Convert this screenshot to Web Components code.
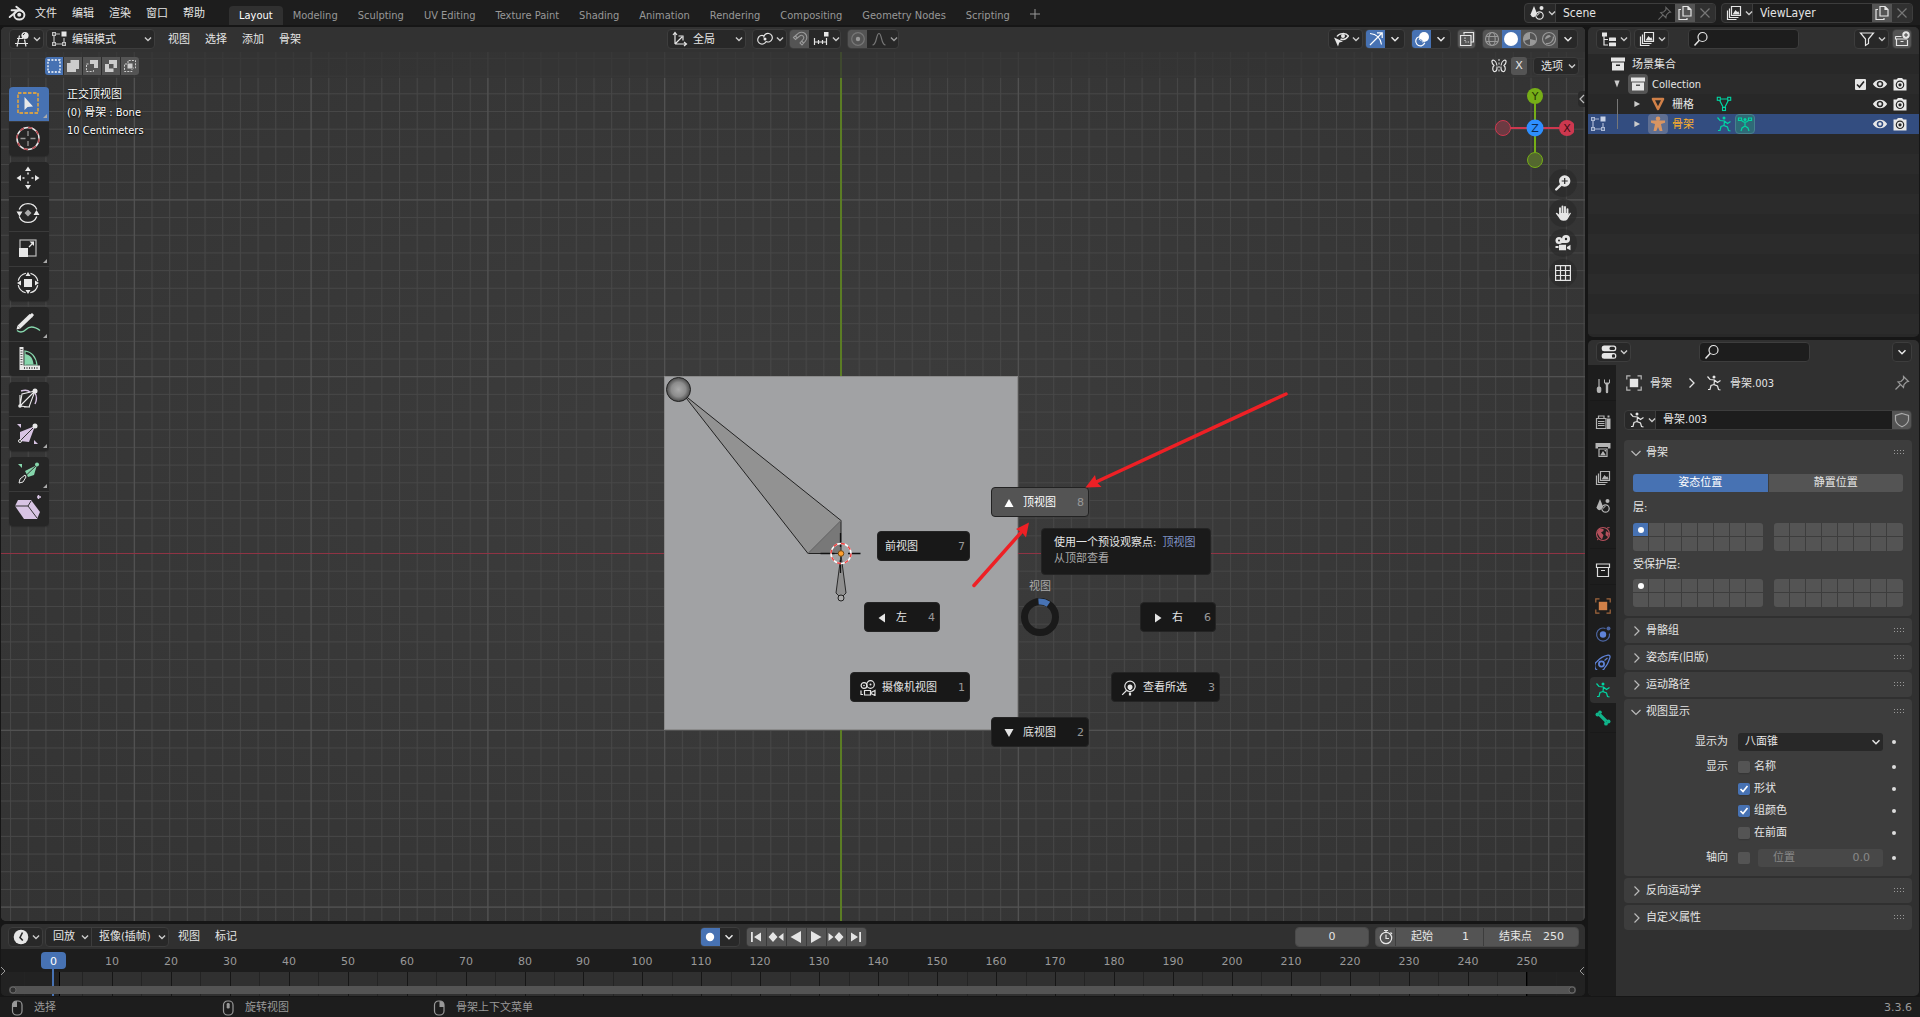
<!DOCTYPE html>
<html lang="zh-CN">
<head>
<meta charset="utf-8">
<title>Blender</title>
<style>
html,body{margin:0;height:100%;background:#161616;overflow:hidden}
body{font-family:"DejaVu Sans Condensed","DejaVu Sans","Noto Sans CJK SC",sans-serif;font-size:11px;line-height:16px;color:#e5e5e5}
</style>
</head>
<body>
<blender-app></blender-app>
<script>
const BASE = `
*{box-sizing:border-box}
button,input,select{font:inherit;color:inherit;border:0;margin:0;padding:0;background:none;border-radius:0;outline:0;text-align:left}
input{min-width:0}
.row{display:flex;align-items:center}
.seg{display:flex;align-items:stretch;height:20px;border:1px solid #3d3d3d;border-radius:4px;overflow:hidden;background:#282828}
.seg>button,.seg>span{display:flex;align-items:center;justify-content:center;white-space:nowrap}
.seg>button{min-width:19px}
.on{background:#4772b3;color:#fff}
.lit{background:#545454}
.dim{background:#303030;color:#777}
.menu{padding:1px 7px 0 8px;white-space:nowrap}
`;
function define(name, css, html, init) {
  const t = document.createElement('template');
  t.innerHTML = `<style>${BASE}${css}</style>${typeof html === 'string' ? html : ''}`;
  customElements.define(name, class extends HTMLElement {
    connectedCallback() {
      if (this.shadowRoot) return;
      const r = this.attachShadow({ mode: 'open' });
      r.append(t.content.cloneNode(true));
      if (typeof html === 'function') r.innerHTML += html(this);
      if (init) init(this, r);
    }
  });
}
const S = 'fill="none" stroke="currentColor" stroke-width="1.2"';
const F = 'fill="currentColor"';
const ICONS = {
  blender: `<g fill="none" stroke="currentColor" stroke-width="1.7" stroke-linecap="round" stroke-linejoin="round"><ellipse cx="10" cy="9.8" rx="4.6" ry="4"/><path d="M1.5 11.6 9 5.6H3.2M7.4 2.4l6 4.8"/></g><circle cx="10" cy="9.6" r="1.8" ${F}/>`,
  chev: `<path d="M4.500 6.300 8 9.800l3.500-3.500" fill="none" stroke="currentColor" stroke-width="1.500"/>`,
  ed3d: `<path d="M3 7.500h6M1 12.500h13M5.500 4.500l-2.500 11M10.500 8.500l1.500 7" ${S}/><circle cx="11" cy="4.500" r="3.600" ${F}/><path d="M9.300 4a2 2 0 0 1 1.500-1.600" stroke="#282828" fill="none"/>`,
  edit: `<g ${S} opacity=".8"><rect x="1.600" y="1.600" width="2.800" height="2.800"/><rect x="1.600" y="11.600" width="2.800" height="2.800"/><rect x="11.600" y="11.600" width="2.800" height="2.800"/><path d="M3 4.500v7M4.500 13h7M13 7v4.500M4.500 3H9"/></g><rect x="10.500" y=".5" width="5" height="5" ${F}/>`,
  orient: `<path d="M3 13V2M3 13h11M3 13l7-7M1 4l2-2.500L5 4M12 11l2.500 2-2.500 2M6.500 5H11v4.500" ${S}/>`,
  pivot: `<path d="M9 10.500a4.300 4.300 0 1 1-2.500-5.800M6.700 6.500a4.300 4.300 0 1 1 2.300 4" ${S}/><circle cx="8" cy="8" r="1.500" ${F}/>`,
  magnet: `<path d="M1.500 6.500 5.500 3a5.200 5.200 0 0 1 8 7l-3.500 4-2-2 3.400-4A2.400 2.400 0 0 0 7.700 5L3.500 8.500zM9.500 10l2 2M3.300 5l2 2" fill="none" stroke="currentColor" stroke-width="1.100"/>`,
  snapinc: `<path d="M1.500 7v7M5.500 9v4M9.500 9v4M13.500 7v7M1.500 11h12" ${S}/><rect x="11" y="1" width="4.500" height="4.500" ${F}/>`,
  propo: `<circle cx="8" cy="8" r="6.300" ${S} opacity=".5"/><circle cx="8" cy="8" r="2.200" ${F}/>`,
  curve: `<path d="M1.500 14C6 14 5 2.500 8 2.500S10 14 14.500 14" ${S}/>`,
  vis: `<path d="M4 5.500C6 2 13 1.500 15.500 5 13 8.800 9.500 8.800 7.500 8" fill="none" stroke="currentColor" stroke-width="1.500"/><circle cx="10" cy="5" r="2" ${F}/><path d="M1 6.500l9 4-3.700 1-1.300 4z" ${F}/>`,
  gizmo: `<path d="M2 2.500C8 3 12.500 7 13.500 13.500M2 14 14 2M9 1.800H14.200V7" ${S}/>`,
  overlay: `<circle cx="10" cy="6" r="5" ${F}/><path d="M5 5.700A4.700 4.700 0 1 0 10.800 11.800" ${S}/><path d="M4.800 8.500a5.500 5.500 0 0 1 3.500-1M8.300 7.500q1.500 2 .5 4" stroke="currentColor" fill="none"/><path d="M6.500 8.200l2.300 2.300" stroke="#4772b3"/>`,
  xray: `<path d="M5 3.500V1.500h9.500V11H12M1.500 4.500h10.500V14.500H1.500z" ${S}/><path d="M6 6.500V11h4.500" stroke="currentColor" stroke-width="1.200" stroke-dasharray="1.200 1.200" fill="none"/>`,
  wire: `<circle cx="8" cy="8" r="6.500" ${S}/><ellipse cx="8" cy="8" rx="3.200" ry="6.500" ${S}/><path d="M2 5.500h12M2 10.500h12" ${S}/>`,
  solid: `<circle cx="8" cy="8" r="7" ${F}/>`,
  matprev: `<circle cx="8" cy="8" r="6.500" ${S}/><path d="M8 8V1.500A6.500 6.500 0 0 0 2 10L8 8zM8 8l6 1.500a6.500 6.500 0 0 1-6 5z" ${F}/>`,
  rendered: `<circle cx="8" cy="8" r="6.500" ${S}/><path d="M4 8.500A4.500 4.500 0 0 1 8.500 4l1.500 1.500z" ${F}/><path d="M5 12.500a6.500 6.500 0 0 0 7.500-7" ${S}/>`,
  butterfly: `<path d="M6 7.500C5.500 2.500 1.500 1 1 3S2 6.500 3 7.500C1 9.500 1.500 14 4 13.500S6 10 6 8.500M10 7.500C10.500 2.500 14.500 1 15 3S14 6.500 13 7.500C15 9.500 14.500 14 12 13.500S10 10 10 8.500" ${S}/><path d="M8 1v14" stroke="currentColor" stroke-dasharray="2 1.500"/>`,
  scene: `<path d="M5 1 1.500 9.500Q3 13.500 6 11.500L8 8.500Z" ${F}/><circle cx="12.500" cy="3" r="2" ${F}/><circle cx="10.500" cy="10.500" r="3.700" ${S}/><path d="M8.500 10.500a2 2 0 0 1 2-2" stroke="currentColor" fill="none"/>`,
  pin: `<path d="M9.500 1.500l5 5-2 .5-2.500 2.500-.5 3L4 7l3-.5L9.500 4zM6.500 9.500l-5 5" ${S}/>`,
  copy: `<path d="M6 1.500h5L14 4.500V11H6zM11 1.500v3h3M4 4.500H2V14.500h8V13" ${S}/>`,
  close: `<path d="M3.500 3.500l9 9M12.500 3.500l-9 9" fill="none" stroke="currentColor" stroke-width="1.200"/>`,
  vlayer: `<path d="M5.500 1.500h9v9h-9zM3.500 3.500v9h9M1.500 5.500v9h9" ${S}/><path d="M6.500 9.500 9.500 5l1.800 2 1-.8 1.500 3.300z" ${F}/>`,
  outl: `<path d="M3 5v9h4M3 8.500h4" ${S}/><rect x="1" y="1.500" width="5" height="4" ${F}/><rect x="8" y="6.500" width="7" height="3.600" rx=".5" ${F}/><rect x="8" y="11.600" width="7" height="3.600" rx=".5" ${F}/>`,
  search: `<circle cx="9.500" cy="6" r="4.500" ${S}/><path d="M6.300 9.300 1.500 14.500" fill="none" stroke="currentColor" stroke-width="1.500"/>`,
  filter: `<path d="M1.500 2h13L9.500 8v4.500l-3 2V8z" ${S}/>`,
  newcoll: `<path d="M1.500 5.500h6M2.500 8v6.500h11V9M1.500 5.500V8h12M6.500 10.500h3" ${S}/><circle cx="12" cy="4" r="3.700" ${F}/><path d="M12 2v4M10 4h4" stroke="#444" fill="none"/>`,
  coll: `<path d="M1 1.500h14v4H1zM2 6.500h12v8H2zM6 8.500v1.600h4V8.500z" fill="currentColor" fill-rule="evenodd"/>`,
  colltab: `<path d="M1.500 2h13v3.500h-13zM2.500 5.500h11v9h-11zM6 8.500h4" ${S}/>`,
  mesh: `<path d="M3 3h10L8 13z" fill="none" stroke="currentColor" stroke-width="2.600" stroke-linejoin="round"/>`,
  meshd: `<path d="M3 3h10L8 13z" ${S}/><g fill="#282828" stroke="currentColor" stroke-width="1.100"><rect x="1.300" y="1.300" width="3" height="3"/><rect x="11.700" y="1.300" width="3" height="3"/><rect x="6.500" y="11.500" width="3" height="3"/></g>`,
  man: `<circle cx="8" cy="2.800" r="2.300" ${F}/><path d="M1 4.500h14v2.200L11 8l1.500 7H9.700L8 11l-1.700 4H3.500L5 8 1 6.700z" ${F}/>`,
  run: `<circle cx="8" cy="2" r="1.500" ${F}/><path d="M1.500 1.500 4 4.500l4.500.500 3 2.500 3-2M8.500 5l-.500 4.500 3.500 1.500 1 3.500 2 .500M8 9.500l-3 1-1 4H2" ${S}/>`,
  pose: `<circle cx="8" cy="3.500" r="1.500" ${F}/><path d="M1.500 2h3v2.500h-3zM11.500 2h3v2.500h-3zM4.500 4.500 6.500 6h3l2-1.500M8 6v4M4 15l1-3 3-2 3 2 1 3" ${S}/>`,
  eye: `<path d="M.8 8C4 2.300 12 2.300 15.200 8 12 13.700 4 13.700.8 8zM8 4.700a3.300 3.300 0 1 0 .010 0z" fill="currentColor" fill-rule="evenodd"/><circle cx="8" cy="8" r="1.700" ${F}/>`,
  cam: `<path d="M1.500 3.500h3L6 2h4l1.500 1.500h3v11h-13z" ${F}/><circle cx="8" cy="8.800" r="3.700" fill="none" stroke="#282828" stroke-width="1.200"/><circle cx="8" cy="8.800" r="1.600" fill="#282828"/>`,
  props: `<rect x=".7" y="1.500" width="14.600" height="5.800" rx="2.500" ${F}/><rect x=".7" y="9" width="14.600" height="5.800" rx="2.500" ${F}/><rect x="8.500" y="2.700" width="5.500" height="3.400" rx="1.500" fill="#282828"/><rect x="11" y="10.200" width="3" height="3.400" rx="1.200" fill="#282828"/>`,
  tool: `<path d="M4 1v8" ${S}/><rect x="1.800" y="8.500" width="4.500" height="6.500" rx="2" ${F}/><path d="M9 1.500v3.200L10.800 6.800V14a1.200 1.200 0 0 0 2.400 0V6.800L15 4.700V1.500H14v3h-4v-3z" ${F}/>`,
  render: `<path d="M1.500 4.500H11v10H1.500zM3.500 4V2h5.500v2" ${S}/><path d="M12 4.500h3.500V15H12zM12.500 1.500h2v2h-2z" ${F}/><path d="M3 7.500h6.500M3 9.500h6.500M3 11.500h6.500" stroke="currentColor"/>`,
  output: `<path d="M.5 1h15v5.500h-2.500V5H3v1.500H.5z" ${F}/><path d="M4 7h8v7.500H4z" ${S}/><path d="M5 13.500l3-4.500 3 4.500zM9 8h2v2z" ${F}/>`,
  world: `<circle cx="8" cy="8" r="6.500" ${S}/><path d="M2 6.500 4.500 2.500l4 .500v2L6 6.500 8.500 9 7 13.500 4.500 11zM11 5l3 2-1 4-2.500-2z" ${F}/><path d="M12 2l2.500-.500M2 14l1.500-1" stroke="currentColor"/>`,
  object: `<rect x="3.800" y="3.800" width="8.400" height="8.400" ${F}/><path d="M.8 4.500V.8h3.700M11.500.8h3.700v3.700M15.200 11.500v3.700h-3.700M4.500 15.200H.8v-3.700" ${S} opacity=".75"/>`,
  physics: `<circle cx="8" cy="8.500" r="3.200" ${F}/><circle cx="13.500" cy="2.500" r="2" ${F} opacity=".7"/><path d="M10.500 2.500a6.500 6.500 0 1 0 4 5" ${S} opacity=".7"/>`,
  constraint: `<path d="M2 7.500C5 4 9 2 13 1.200c1.800-.2 2.500 1 1.800 2.800C13.500 8 12 11.500 9.800 13.500M2 7.500a5.200 5.200 0 1 0 7.800 6" ${S}/><circle cx="6.500" cy="10" r="2.600" fill="none" stroke="currentColor" stroke-width="1.700"/><path d="M9.500 6.500l3-2.500" ${S}/>`,
  bone: `<path d="M4.500 4.500l7 7" fill="none" stroke="currentColor" stroke-width="3.200"/><circle cx="2.500" cy="4.500" r="2" ${F}/><circle cx="5" cy="2.300" r="1.800" ${F}/><circle cx="13.500" cy="11.500" r="2" ${F}/><circle cx="11" cy="13.700" r="1.900" ${F}/>`,
  shield: `<path d="M8 1.500 14.500 3.500V8C14 11.500 11 13.500 8 14.800 5 13.500 2 11.500 1.500 8V3.500z" ${S}/>`,
  clock: `<circle cx="8" cy="8" r="7.300" ${F}/><path d="M9.500 3.500 7 8.500 9.800 11.500" fill="none" stroke="#282828" stroke-width="1.600"/>`,
  watch: `<circle cx="8" cy="9" r="5.700" ${S}/><path d="M6 1.500h4M8 1.500v2M12.500 3.500l1.500 1.500M8 5.500V9.500h3" ${S}/>`,
  first: `<path d="M3 3h1.800v10H3zM13 3.500v9L6 8z" ${F}/>`,
  last: `<path d="M11.200 3H13v10h-1.800zM3 3.500v9L10 8z" ${F}/>`,
  prevk: `<path d="M5 3l4.500 5L5 13 .5 8zM15.500 4v8L10.500 8z" ${F}/>`,
  nextk: `<path d="M11 3l4.500 5L11 13 6.500 8zM.5 4v8L5.500 8z" ${F}/>`,
  rev: `<path d="M13 2v12L2.500 8z" ${F}/>`,
  play: `<path d="M3 2v12L13.500 8z" ${F}/>`,
  dot: `<circle cx="8" cy="8" r="4.200" ${F}/>`,
  mouseL: `<rect x="3.500" y="1" width="9.500" height="14" rx="4" ${S}/><path d="M8 1v6H3.500V4Q4 1 8 1z" ${F}/>`,
  mouseM: `<rect x="3.500" y="1" width="9.500" height="14" rx="4" ${S}/><rect x="6.700" y="3" width="3" height="5.500" rx="1.200" ${F}/>`,
  mouseR: `<rect x="3.500" y="1" width="9.500" height="14" rx="4" ${S}/><path d="M8.500 1v6H13V4Q12.500 1 8.500 1z" ${F}/>`,
  zoom: `<circle cx="9.700" cy="6" r="5.700" ${F}/><path d="M6 9.800 1.200 14.500" stroke="currentColor" stroke-width="2.400" stroke-linecap="round"/><path d="M9.700 3v6M6.700 6h6" stroke="#282828" stroke-width="1.200"/>`,
  hand: `<path d="M5 9V3.200M7.500 8V1.500M10 8V2M12.500 9V4.200" fill="none" stroke="currentColor" stroke-width="1.900" stroke-linecap="round"/><path d="M4 8h9.500v2L15 7.500l1 .8-3.500 6q-1 1.500-4 1.500-3.500 0-4.500-3L.8 8.500Q1 7.300 2.200 8L4.500 10z" ${F}/>`,
  camera: `<circle cx="4" cy="5.500" r="3.500" ${F}/><circle cx="11" cy="4" r="4" ${F}/><path d="M3 4h8v4H3zM4 9.800h7v5.500H4zM12 12l3.500-2.300v5.600L12 13.500zM.5 11h3v2h-3z" ${F}/><circle cx="4" cy="5.500" r="1" fill="#282828"/><circle cx="11" cy="4" r="1.200" fill="#282828"/>`,
  persp: `<path d="M.6.600h14.800v14.800H.600zM5.500.600v14.800M10.500.600v14.800M.600 5.500h14.800M.600 10.500h14.800" ${S}/>`,
  camview: `<circle cx="4" cy="5.500" r="2.900" ${S}/><circle cx="10.500" cy="4.500" r="3.800" ${S}/><circle cx="4" cy="5.500" r=".8" ${F}/><circle cx="10.500" cy="4.500" r="1" ${F}/><path d="M4.500 10.500h6v4.500h-6zM11 12.500l4-2v5l-4-2M1 10.500v4h2" ${S}/>`,
  viewsel: `<circle cx="9" cy="6.300" r="5.200" ${S}/><path d="M5.500 10.500 1.200 14.800" ${S}/><circle cx="9" cy="7" r="2.500" ${F}/><path d="M9 7v3M9 12.500v3" stroke="currentColor" stroke-width="2.200"/>`,
  up: `<path d="M8 4l4.500 8h-9z" ${F}/>`, down: `<path d="M8 12l4.500-8h-9z" ${F}/>`,
  left: `<path d="M4.500 8 11 3.500v9z" ${F}/>`, right: `<path d="M11.500 8 5 3.500v9z" ${F}/>`,
  tdown: `<path d="M8 12l3-8H5z" ${F}/>`, tright: `<path d="M11.500 8 5 4.500v7z" ${F}/>`,
  gt: `<path d="M5.500 3.500l4.500 4.500-4.500 4.500" fill="none" stroke="currentColor" stroke-width="1.300"/>`,
  selnew: `<rect x="2" y="2" width="12" height="12" fill="none" stroke="currentColor" stroke-width="1.300" stroke-dasharray="2 1.400"/>`,
  seladd: `<path d="M5.500 2H14v9h-3v3H2V5h3.500z" ${F}/>`,
  selsub: `<path d="M6 2h8v8h-4V6H6z" ${F}/><path d="M2.500 7v6.500H9.500V11M2.500 6H5" fill="none" stroke="currentColor" stroke-dasharray="2 1.200"/>`,
  selinv: `<path d="M6 2h8v8h-3.500v4H2V6h4zM6 6v4.500h4.500V6z" fill="currentColor" fill-rule="evenodd"/>`,
  selint: `<rect x="5.500" y="5.500" width="5" height="5" ${F}/><path d="M6 5V2.500h7.500V10H11M5 6H2.500v7.500H10V11" fill="none" stroke="currentColor" stroke-dasharray="2 1.200"/>`
};
define('bl-icon', `:host{display:inline-flex;flex:none;width:16px;height:16px}svg{display:block;width:100%;height:100%}`,
  el => `<svg viewBox="0 0 16 16" aria-hidden="true">${ICONS[el.getAttribute('name')] || ''}</svg>`);

define('bl-drop', `:host{display:flex;height:20px}
button{flex:1;display:flex;align-items:center;background:#282828;border:1px solid #3d3d3d;border-radius:4px;padding:0 0 0 4px;white-space:nowrap}
:host([flat]) button{border:0;border-radius:0;background:none}
:host([plain]) button{padding-left:7px}
span{flex:1;padding:1px 0 0 5px}:host([plain]) span{padding-left:0}
:host([bare]) span{padding:0}
.c{width:14px;height:14px;margin-right:-1px;color:#ccc}`,
  el => `<button aria-haspopup="true" aria-label="${el.getAttribute('icon') || 'menu'}">${el.hasAttribute('icon') ? `<bl-icon name="${el.getAttribute('icon')}"></bl-icon>` : ''}<span><slot></slot></span><bl-icon class="c" name="chev"></bl-icon></button>`);

define('id-block', `:host{display:block}.seg{width:192px}bl-drop{width:31px;border-right:1px solid #3d3d3d;height:auto}
.f{flex:1;background:#1d1d1d;padding:0 3px 0 7px;font-size:12px}input{flex:1;width:50px}.f bl-icon{color:#666;width:15px;height:15px}.seg>button{min-width:20px}`,
  el => `<div class="seg"><bl-drop flat bare icon="${el.getAttribute('icon')}"></bl-drop><span class="f row"><input aria-label="${el.getAttribute('value')}" value="${el.getAttribute('value')}">${el.hasAttribute('pin') ? '<bl-icon name="pin"></bl-icon>' : ''}</span><button class="lit" aria-label="copy"><bl-icon name="copy"></bl-icon></button><button class="dim" aria-label="remove"><bl-icon name="close"></bl-icon></button></div>`);

define('top-bar', `:host{display:flex;height:27px;background:#1d1d1d;border-bottom:2px solid #161616;padding-right:7px;align-items:flex-start}
.m{display:flex;height:26px;align-items:center;padding-left:6px}.logo{margin:0 1px 0 2px;width:18px;height:18px}
nav{display:flex;flex:1;padding:6px 0 0 17px;height:25px}
nav button{padding:1px 10px 0;color:#989898;height:19px;white-space:nowrap}
nav button.a{background:#303030;color:#fff;border-radius:4px 4px 0 0}
.ids{display:flex;gap:5px;padding-top:3px}`,
  `<div class="m"><bl-icon class="logo" name="blender"></bl-icon><button class="menu">文件</button><button class="menu">编辑</button><button class="menu">渲染</button><button class="menu">窗口</button><button class="menu">帮助</button></div>
<nav><button class="a">Layout</button><button>Modeling</button><button>Sculpting</button><button>UV Editing</button><button>Texture Paint</button><button>Shading</button><button>Animation</button><button>Rendering</button><button>Compositing</button><button>Geometry Nodes</button><button>Scripting</button><button aria-label="add"><svg width="10" height="10" viewBox="0 0 10 10"><path d="M5 0v10M0 5h10" stroke="#989898" fill="none"/></svg></button></nav>
<div class="ids"><id-block icon="scene" value="Scene" pin></id-block><id-block icon="vlayer" value="ViewLayer"></id-block></div>`);

const W = '#e8e8e8', P = '#d8c4e4', G = '#86d6ac';
const TOOLS = [
 [[`<rect x="9" y="6" width="20" height="20" fill="none" stroke="#ffae29" stroke-width="1.300" stroke-dasharray="3.500 1.500"/><path d="M15.500 10v13l3-3 5.500-.500z" fill="${W}"/>`,1,1],
  [`<circle cx="19" cy="16.500" r="11" fill="none" stroke="${W}" stroke-width="1.500"/><circle cx="19" cy="16.500" r="11" fill="none" stroke="#b5484f" stroke-width="1.500" stroke-dasharray="4.300 4.300"/><path d="M19 9v5M19 19v5M11.500 16.500h5M21.500 16.500h5" stroke="#999" stroke-width="1.300"/>`]],
 [[`<path d="M19 4.500l3 4.500h-6zM19 27.500l3-4.500h-6zM7.500 16l4.500-3v6zM30.500 16 26 13v6z" fill="${W}"/><path d="M19 10.500v2M19 19.500v2M13.500 16h2M22.500 16h2" stroke="${W}" stroke-width="1.500"/>`],
  [`<path d="M10.200 12.500a9.500 9.500 0 0 1 17.600 0M10.200 19.500a9.500 9.500 0 0 0 17.600 0" fill="none" stroke="${W}" stroke-width="1.300"/><path d="M7.500 14.500h6l-3 5zM24.500 18h6l-3-5z" fill="${W}"/><path d="M19 12.500l3.500 3.500-3.500 3.500-3.500-3.500z" fill="#aaa"/>`],
  [`<rect x="11" y="8" width="16" height="16" fill="none" stroke="#bbb" stroke-width="1.200"/><rect x="10" y="16" width="9" height="9" fill="${W}"/><path d="M20 15l3.500-3.500" stroke="${W}" stroke-width="1.300"/><path d="M25 9.500v4.500l-4.500-4.500z" fill="${W}"/>`,1],
  [`<circle cx="19" cy="16" r="10" fill="none" stroke="${W}" stroke-width="1.200" stroke-dasharray="11 4.700" stroke-dashoffset="-2.300"/><rect x="15" y="12" width="8" height="8" fill="${W}"/><path d="M19 5l2.500 4h-5zM19 27l2.500-4h-5zM8 16l4-2.500v5zM30 16l-4-2.500v5z" fill="${W}"/>`]],
 [[`<path d="M8 23.500c4 3 7 1 9-1s6-5 14 1" fill="none" stroke="${G}" stroke-width="1.400"/><path d="M10 20 22 8.500" stroke="${W}" stroke-width="4"/><path d="M7.500 22.500l1-4 3 3zM20.500 8l2.500-2 2 2-2 2.500z" fill="${W}"/>`,1],
  [`<path d="M16 9c8 1 11 7 12 14H16z" fill="none" stroke="${G}" stroke-width="1.200"/><path d="M16 12c6 1 8 5 8.500 10.500H16z" fill="${G}"/><path d="M10.500 5h4v18.500H31V28H10.500z" fill="${W}"/><path d="M12.500 7v17M15 26h15" stroke="#555" stroke-width="2" stroke-dasharray="1 1.500"/>`]],
 [[`<path d="M11 24 26 9 20 25zM11 24l2-12 13-3M11 24v-11M15 25h6" fill="none" stroke="${W}" stroke-width="1.100"/><path d="M12 9q6-2 9 1M26 11q3 5 0 11" fill="none" stroke="${P}" stroke-width="1.400"/><circle cx="26" cy="9" r="2.500" fill="${W}"/><circle cx="11" cy="24" r="1.800" fill="${W}"/>`],
  [`<path d="M26 9 11 15v9l9 1z" fill="${P}"/><path d="M26 9 11 24" stroke="#333"/><circle cx="26" cy="9" r="2.500" fill="${W}"/><circle cx="11" cy="24" r="1.500" fill="none" stroke="${W}"/><path d="M8 7h4v4zM29 27h-4v-4z" fill="${P}"/>`,1]],
 [[`<path d="M28 8 16 14l3 6 6-2z" fill="${G}"/><path d="M28 8 10 25" stroke="#333"/><circle cx="28" cy="7.500" r="2" fill="${G}"/><path d="M16 18l-5 4-1 4 4-1 3-5z" fill="none" stroke="${W}"/><path d="M9 7h4v4z" fill="${G}"/>`,1],
  [`<path d="M6 14 9 8h13l9 12-3 7H15z" fill="${P}"/><path d="M6 14h13l9 12M19 14l3-5" fill="none" stroke="#333"/><path d="M28 5h4M29.500 3v4" stroke="${P}" stroke-width="1.500"/>`]]
];
define('tool-shelf', `:host{display:flex;flex-direction:column;gap:6px;width:40px}
div{display:flex;flex-direction:column;gap:1px;border-radius:4px;overflow:hidden;box-shadow:0 1px 1px #2228;background:#3a3a3a}
button{height:34px;background:#262626}button.a{background:#4772b3}svg{display:block}`,
  () => TOOLS.map(g => `<div>${g.map(t => `<button aria-label="tool"${t[2] ? ' class="a"' : ''}><svg width="40" height="34" viewBox="0 0 40 34">${t[0]}${t[1] ? '<path d="M38 27v4h-4z" fill="#aaa"/>' : ''}</svg></button>`).join('')}</div>`).join(''));

define('pie-item', `:host{position:absolute;height:30px;display:flex}
button{flex:1;display:flex;align-items:center;background:#181818;border:1px solid #242424;border-radius:4px;padding:1px 4px 0 9px;white-space:nowrap}
:host([noicon]) button{padding-left:7px}
:host([active]) button{background:#545454;border-color:#222;color:#fff}
.l{flex:1;padding-left:6px}:host([noicon]) .l{padding-left:0}.k{color:#999;font-family:"DejaVu Sans"}`,
  el => `<button>${el.hasAttribute('icon') ? `<bl-icon name="${el.getAttribute('icon')}"></bl-icon>` : ''}<span class="l"><slot></slot></span><span class="k">${el.getAttribute('key')}</span></button>`);

define('view-canvas', `:host{display:block;position:absolute;inset:0}svg{display:block;width:100%;height:100%}`,
 `<svg><defs>
<radialGradient id="bg" cx=".5" cy=".5" r=".7"><stop offset="0" stop-color="#3d3d3d"/><stop offset="1" stop-color="#333"/></radialGradient>
<radialGradient id="ball"><stop offset="0" stop-color="#aaa"/><stop offset=".6" stop-color="#8c8c8c"/><stop offset="1" stop-color="#4a4a4a"/></radialGradient>
<pattern id="mi" width="17.680" height="17.680" patternUnits="userSpaceOnUse" x="840" y="526"><path d="M.5 0v17.680M0 .5h17.680" stroke="#474747" fill="none"/></pattern>
<pattern id="ma" width="176.800" height="176.800" patternUnits="userSpaceOnUse" x="840" y="526"><path d="M.5 0v176.800M0 .5h176.800" stroke="#545454" fill="none"/></pattern></defs>
<rect width="100%" height="100%" fill="url(#bg)"/><rect width="100%" height="100%" fill="url(#mi)"/><rect width="100%" height="100%" fill="url(#ma)"/>
<path d="M0 526.500h3000" stroke="#8f3344"/><path d="M840 0v1500" stroke="#5b7d24" stroke-width="2"/>
<g transform="translate(-1 -27)">
<rect x="664.500" y="376.500" width="353" height="353" fill="#a1a2a4" stroke="#8b8b8b"/>
<path d="M683 394 808 553.500 841 520.500z" fill="#929292"/><path d="M841 520.500V553.500H808z" fill="#787878"/>
<path d="M683 394 808 553.500H841V520.500ZM808 553.500 841 520.500" fill="none" stroke="#222"/><path d="M808 553.500 841 520.500" stroke="#929292" fill="none"/>
<circle cx="678.500" cy="389.500" r="12" fill="url(#ball)" stroke="#222"/>
<path d="M841 555l-5 38 3 3h4l3-3z" fill="#8f8f8f" stroke="#2a2a2a"/><circle cx="841" cy="598" r="3" fill="#aaa" stroke="#222"/>
<path d="M820.500 553.500h14M848 553.500h12.500M840.500 533v14M840.500 560v13" stroke="#111" stroke-width="1.300"/>
<circle cx="841" cy="553.500" r="10" fill="none" stroke="#fff" stroke-width="1.500"/><circle cx="841" cy="553.500" r="10" fill="none" stroke="#f04040" stroke-width="1.500" stroke-dasharray="3.900 3.900"/>
<circle cx="841" cy="553.500" r="2.800" fill="#ffa02e" stroke="#7a4a10"/></g></svg>`);

define('view-marks', `:host{display:block;position:absolute;inset:0;pointer-events:none}svg{display:block;width:100%;height:100%}`,
 `<svg><g transform="translate(-1 -27)"><circle cx="1040" cy="617" r="15.500" fill="none" stroke="#1a1a1a" stroke-width="7"/><path d="M1038.500 601.600a15.500 15.500 0 0 1 10 2.700" fill="none" stroke="#4772b3" stroke-width="6"/>
<g stroke="#ee2025" stroke-width="3.500" stroke-linecap="round" fill="none"><path d="M1286 394 1096 482M974 585.500l47-53"/></g>
<path d="M1085.500 487.500 1095 475 1096.500 482 1101.500 487zM1029 522.500 1016 529l6 3.500 4 5z" fill="#ee2025"/></g></svg>`);

define('axis-gizmo', `:host{display:block;position:absolute;right:11px;top:60px;width:80px;height:82px}`,
 `<svg width="80" height="82" viewBox="0 0 80 82" font-family="DejaVu Sans" font-size="11" text-anchor="middle"><g stroke-width="2"><path d="M41 9v64" stroke="#76ae17"/><path d="M9 41h64" stroke="#cd384f"/></g>
<circle cx="9" cy="41" r="7.500" fill="#6c3a42" stroke="#cd384f"/><circle cx="41" cy="73" r="7.500" fill="#54682f" stroke="#76ae17"/><circle cx="41" cy="9" r="8" fill="#76ae17"/><circle cx="73" cy="41" r="8" fill="#cd384f"/><circle cx="41" cy="41" r="8.500" fill="#2e8fff"/>
<text x="41" y="13" fill="#243505">Y</text><text x="73" y="45" fill="#3c0c14">X</text><text x="41" y="45" fill="#0c2a52">Z</text></svg>`);

define('view-3d', `:host{display:block;position:relative;overflow:hidden;border-radius:5px;background:#393939}
header{position:relative;display:grid;grid-template-columns:659fr auto 680fr;padding:2px 7px 3px 8px;background:#323232}
.g{display:flex;gap:6px;align-items:center}.r{justify-content:flex-end}.g .m{display:flex;padding-left:0;margin-left:-1px}
.seg bl-drop{height:18px;width:31px}
.shade{width:96px}.shade button{flex:1;min-width:0}.o{color:#999}
.sub{position:relative;display:flex;justify-content:space-between;background:#333333b8;padding:5px 6px 3px 44px;height:26px}
.modes{height:18px;border:0;background:#2d2d2d;gap:1px;border-radius:3px}.modes button{width:18px;min-width:18px;background:#545454;color:#ccc}.modes .on{background:#4772b3;color:#fff}
.x{height:18px;width:16px;background:#545454;border-radius:3px;text-align:center;font-family:"DejaVu Sans"}
.opt{height:18px}.info{position:absolute;left:66px;top:59px;line-height:18px;color:#fff;text-shadow:0 1px 2px #000,0 0 1px #000}
.info div{white-space:pre}
tool-shelf{position:absolute;left:8px;top:60px}
.nav{position:absolute;right:8px;top:142px;display:flex;flex-direction:column;gap:2px}
.nav button{width:28px;height:28px;border-radius:14px;background:#2a2a2aaa;display:flex;align-items:center;justify-content:center}
.n{position:absolute;right:0;top:64px;width:7px;height:16px;background:#2a2a2a;border-radius:4px 0 0 4px}.n svg{display:block}
.tip{position:absolute;left:1040px;top:501px;width:170px;height:47px;background:#1a1a1a;border:1px solid #242424;border-radius:4px;padding:6px 12px;line-height:16px;white-space:nowrap}
.tip b{font-weight:400;color:#8296c8;padding-left:3px}.tip div+div{color:#aaa}.ttl{position:absolute;left:1028px;top:552px;color:#aaa;white-space:nowrap}`,
 `<view-canvas></view-canvas>
<header><div class="g"><bl-drop style="width:31px" bare icon="ed3d"></bl-drop><bl-drop style="width:109px" icon="edit">编辑模式</bl-drop><div class="m"><button class="menu">视图</button><button class="menu">选择</button><button class="menu">添加</button><button class="menu">骨架</button></div></div>
<div class="g"><bl-drop style="width:79px" icon="orient">全局</bl-drop><bl-drop bare style="width:31px" icon="pivot"></bl-drop><div class="seg"><button class="lit o" aria-label="snap"><bl-icon name="magnet"></bl-icon></button><bl-drop flat bare icon="snapinc"></bl-drop></div><div class="seg"><button class="lit o" aria-label="proportional"><bl-icon name="propo"></bl-icon></button><bl-drop class="o" style="opacity:.7" flat bare icon="curve"></bl-drop></div></div>
<div class="g r"><bl-drop bare style="width:31px" icon="vis"></bl-drop><div class="seg"><button class="on" aria-label="gizmo"><bl-icon name="gizmo"></bl-icon></button><button aria-label="gizmo options"><bl-icon name="chev"></bl-icon></button></div><div class="seg"><button class="on" aria-label="overlay"><bl-icon name="overlay"></bl-icon></button><button aria-label="overlay options"><bl-icon name="chev"></bl-icon></button></div><div class="seg"><button class="lit" style="min-width:17px" aria-label="xray"><bl-icon name="xray"></bl-icon></button></div>
<div class="seg shade"><button class="lit o" aria-label="wire"><bl-icon name="wire"></bl-icon></button><button class="on" aria-label="solid"><bl-icon name="solid"></bl-icon></button><button class="lit o" aria-label="material"><bl-icon name="matprev"></bl-icon></button><button class="lit o" aria-label="rendered"><bl-icon name="rendered"></bl-icon></button><button aria-label="shading"><bl-icon name="chev"></bl-icon></button></div></div></header>
<div class="sub"><div class="seg modes"><button class="on" aria-label="new"><bl-icon name="selnew"></bl-icon></button><button aria-label="extend"><bl-icon name="seladd"></bl-icon></button><button aria-label="subtract"><bl-icon name="selsub"></bl-icon></button><button aria-label="invert"><bl-icon name="selinv"></bl-icon></button><button aria-label="intersect"><bl-icon name="selint"></bl-icon></button></div>
<div class="g"><div class="row" style="gap:4px"><bl-icon name="butterfly"></bl-icon><button class="x">X</button></div><bl-drop class="opt" plain style="width:46px">选项</bl-drop></div></div>
<div class="info"><div>正交顶视图</div><div>(0) 骨架 : Bone</div><div>10 Centimeters</div></div>
<tool-shelf></tool-shelf><axis-gizmo></axis-gizmo>
<div class="nav"><button aria-label="zoom"><bl-icon name="zoom"></bl-icon></button><button aria-label="pan"><bl-icon name="hand"></bl-icon></button><button aria-label="camera"><bl-icon name="camera"></bl-icon></button><button aria-label="projection"><bl-icon name="persp"></bl-icon></button></div>
<div class="n"><svg width="7" height="16"><path d="M6 4 2 8l4 4" stroke="#bbb" fill="none" stroke-width="1.200"/></svg></div>
<pie-item active icon="up" key="8" style="left:990px;top:460px;width:98px">顶视图</pie-item>
<pie-item noicon key="7" style="left:876px;top:504px;width:93px">前视图</pie-item>
<pie-item icon="left" key="4" style="left:863px;top:575px;width:76px">左</pie-item>
<pie-item icon="right" key="6" style="left:1139px;top:575px;width:76px">右</pie-item>
<pie-item icon="camview" key="1" style="left:849px;top:645px;width:120px">摄像机视图</pie-item>
<pie-item icon="viewsel" key="3" style="left:1110px;top:645px;width:109px">查看所选</pie-item>
<pie-item icon="down" key="2" style="left:990px;top:690px;width:98px">底视图</pie-item>
<div class="tip" role="tooltip"><div>使用一个预设观察点: <b>顶视图</b></div><div>从顶部查看</div></div><div class="ttl">视图</div>
<view-marks></view-marks>`);

define('time-line', `:host{display:block;position:relative;overflow:hidden;border-radius:5px;background:#303030}
header{height:25px;display:grid;grid-template-columns:692fr auto 713fr;align-items:center;padding:0 6px 0 7px}
.g{display:flex;gap:6px;align-items:center}.r{justify-content:flex-end}.m{display:flex}
.seg bl-drop{height:18px}.seg bl-drop+bl-drop{border-left:1px solid #3d3d3d}
.t{height:20px;gap:1px;background:#3a3a3a;border-color:#3a3a3a}.t button{width:19px;background:#545454}
.f{border-color:#4a4a4a;gap:1px;background:#3d3d3d}.f>*{background:#545454}
.num{font-family:"DejaVu Sans";font-size:11px}input.num{text-align:center}.seg>label{display:flex;align-items:center;padding:1px 14px 0 15px;justify-content:space-between}.seg>label input{text-align:right;width:26px}
.ruler{position:relative;height:47px;background:#1d1d1d}.ruler svg{display:block;width:100%;height:47px}`,
 el => {
  let s = '';
  const x0 = 52, st = 58.94;
  for (let f = -5; f <= 255; f += 5) { const x = Math.round(x0 + f / 10 * st); const big = f % 10 === 0;
    s += `<path d="M${x}.5 23v24" stroke="${big ? '#161616' : '#242424'}"/>`;
    if (big && f > 0) s += `<text x="${x}" y="16" fill="#999">${f}</text>`; }
  return `<header><div class="g"><bl-drop bare style="width:31px" icon="clock"></bl-drop><div class="seg"><bl-drop flat plain style="width:45px">回放</bl-drop><bl-drop flat plain style="width:77px">抠像(插帧)</bl-drop></div><div class="m"><button class="menu" style="padding-left:3px">视图</button><button class="menu">标记</button></div></div>
<div class="g"><div class="seg"><button class="on" aria-label="auto key"><bl-icon name="dot"></bl-icon></button><button aria-label="auto key options"><bl-icon name="chev"></bl-icon></button></div><div class="seg t">${['first','prevk','rev','play','nextk','last'].map(n => `<button aria-label="${n}"><bl-icon name="${n}"></bl-icon></button>`).join('')}</div></div>
<div class="g r"><div class="seg f" style="width:74px"><input class="num" aria-label="frame" style="width:100%" value="0"></div><div class="seg f"><button aria-label="preview range"><bl-icon name="watch"></bl-icon></button><label style="width:87px">起始<input class="num" value="1"></label><label style="width:94px">结束点<input class="num" value="250"></label></div></div></header>
<div class="ruler"><svg font-family="DejaVu Sans" font-size="11" text-anchor="middle"><rect y="23" width="100%" height="24" fill="#222"/><rect x="58" y="23" width="1468" height="24" fill="#303030"/>${s}<path d="M58.500 23v24M1525.500 23v24" stroke="#000"/>
<path d="M52 18v29" stroke="#4772b3" stroke-width="2"/><rect x="8" y="37" width="1567" height="8" rx="4" fill="#545454"/><rect x="9" y="38" width="6" height="6" rx="3" fill="#303030" stroke="#666"/><rect x="1568" y="38" width="6" height="6" rx="3" fill="#303030" stroke="#666"/>
<rect x="40" y="3" width="25" height="17" rx="4" fill="#4772b3"/><text x="52.500" y="16" fill="#fff">0</text><path d="M0 18l4 4-4 4M1583 18l-4 4 4 4" fill="none" stroke="#999"/></svg></div>`; });

define('tree-row', `:host{display:flex;align-items:center;height:20px;padding:0 11px 0 2px}
:host(:nth-child(even)){background:#2b2b2b}:host([sel]){background:#334d80}
.e{width:16px;height:16px;color:#c8d2e6}.t{width:16px;height:14px;color:#ccc;margin:0 3px 0 3px}
.i{width:20px;height:20px;border-radius:4px;display:flex;align-items:center;justify-content:center}.i.b{background:#545454}
:host([sel]) .i.b{background:#5f6f92}.x{display:flex;margin-left:auto;align-items:center}
.n{padding:1px 0 0 4px;white-space:nowrap}:host([sel]) .n{color:#ffaf29}.d{display:flex;padding-left:22px;color:#00d6a3;gap:3px;align-items:center}
.d .p{width:20px;height:20px;border-radius:4px;display:flex;align-items:center;justify-content:center;background:#2f6a77;border:1px solid #48808e}
input{appearance:none;width:11px;height:11px;background:#e5e5e5;border-radius:1px}
.x label{display:flex;position:relative;margin-right:2px}.x label svg{position:absolute;left:0;top:0;pointer-events:none}.x{color:#e8e8e8;gap:4px}`,
 el => { const a = n => el.getAttribute(n), k = a('kind'), lv = +a('level');
  return `${a('sel') !== null ? '<bl-icon class="e" name="edit"></bl-icon>' : '<span class="e"></span>'}<span style="width:${lv ? (lv - 1) * 20 : 0}px"></span>${lv ? `<bl-icon class="t" name="${lv === 1 ? 'tdown' : 'tright'}"></bl-icon>` : '<span style="width:2px"></span>'}<span class="i${a('boxed') !== null ? ' b' : ''}" style="color:${a('tint') || '#e5e5e5'}"><bl-icon name="${k}"></bl-icon></span><span class="n"><slot></slot></span>
${a('data') ? `<span class="d">${a('data').split(' ').map((d, i) => i ? `<span class="p"><bl-icon name="${d}"></bl-icon></span>` : `<bl-icon name="${d}"></bl-icon>`).join('')}</span>` : ''}
${lv ? `<span class="x">${lv === 1 ? '<label><input type="checkbox" checked aria-label="enabled"><svg width="11" height="11"><path d="M2 5.500 4.500 8 9 2.500" stroke="#222" stroke-width="1.600" fill="none"/></svg></label>' : ''}<bl-icon name="eye"></bl-icon><bl-icon name="cam"></bl-icon></span>` : ''}`; });

define('out-liner', `:host{display:flex;flex-direction:column;border-radius:5px;overflow:hidden;background:#282828;position:relative}
header{height:27px;background:#303030;display:flex;align-items:center;gap:6px;padding:0 7px 3px 8px;flex:none}
.s{width:111px;background:#1d1d1d;margin:0 auto 0 16px}.s bl-icon{margin:1px 0 0 4px}.s input{flex:1}
.b{flex:1}.stripe{height:20px}.stripe:nth-child(even){background:#2b2b2b}
.seg .lit{min-width:18px}.ln{position:absolute;left:29px;top:72px;width:1px;height:30px;background:#777}`,
 `<header><bl-drop bare style="width:32px" icon="outl"></bl-drop><bl-drop bare style="width:32px" icon="vlayer"></bl-drop><label class="seg s"><bl-icon name="search"></bl-icon><input aria-label="search"></label><bl-drop bare style="width:32px" icon="filter"></bl-drop><div class="seg"><button class="lit" aria-label="new collection"><bl-icon name="newcoll"></bl-icon></button></div></header>
<div class="b"><tree-row level="0" kind="coll">场景集合</tree-row><tree-row level="1" kind="coll" boxed>Collection</tree-row><tree-row level="2" kind="mesh" tint="#d08048" data="meshd">栅格</tree-row><tree-row level="2" kind="man" tint="#d99562" boxed data="run pose" sel>骨架</tree-row>${'<div class="stripe"></div>'.repeat(11)}</div><div class="ln"></div>`);

define('bl-panel', `:host{display:block;background:#3d3d3d;border-radius:4px}
.h{display:flex;align-items:center;width:100%;height:25px;padding:0 7px 0 6px}
.h span{flex:1;padding-left:4px;padding-top:1px}.h .c{width:12px;height:12px;color:#bbb;flex:none}.b{padding:9px}`,
 el => `<button class="h"><svg class="c" viewBox="0 0 12 12"><path d="${el.hasAttribute('open') ? 'M1.500 4 6 8.500 10.500 4' : 'M4.500 1.500 9 6l-4.500 4.500'}" fill="none" stroke="currentColor" stroke-width="1.200"/></svg><span>${el.getAttribute('heading')}</span><svg width="11" height="5"><path d="M0 .5h11M0 3.500h11" stroke="#999" stroke-dasharray="1 2"/></svg></button>${el.hasAttribute('open') ? '<div class="b"><slot></slot></div>' : ''}`);

define('layer-grid', `:host{display:grid;grid-template-columns:1fr 1fr;gap:11px}
div{display:grid;grid-template-columns:repeat(8,1fr);background:#3d3d3d;border-radius:3px;overflow:hidden;gap:0}
button{height:14px;background:#545454;border-right:1px solid #3d3d3d;display:flex;align-items:center;justify-content:center}
button:nth-child(-n+8){border-bottom:1px solid #3d3d3d}button:nth-child(8n){border-right:0}
i{width:6px;height:6px;border-radius:3px;background:#fff}.a{background:#4772b3}`,
 el => [0, 1].map(g => `<div>${Array.from({ length: 16 }, (_, i) => `<button aria-label="layer ${g * 16 + i + 1}"${!g && !i && el.hasAttribute('active') ? ' class="a"' : ''}>${!g && !i ? '<i></i>' : ''}</button>`).join('')}</div>`).join(''));

define('prop-check', `:host{display:flex;height:22px;align-items:center}
.l{width:95px;text-align:right;margin-right:10px;white-space:nowrap}label{display:flex;align-items:center;gap:4px;flex:1;position:relative;white-space:nowrap}
input{appearance:none;width:12px;height:12px;border-radius:2px;background:#545454;box-shadow:0 1px 1px #2224}input:checked{background:#4772b3}
label svg{position:absolute;left:1px;top:3px}i{width:4px;height:4px;border-radius:2px;background:#ddd;margin-right:7px}`,
 el => `<span class="l">${el.getAttribute('label') || ''}</span><label><input type="checkbox" ${el.hasAttribute('checked') ? 'checked' : ''}>${el.hasAttribute('checked') ? '<svg width="10" height="10"><path d="M1.500 5 4 7.500 8.500 2" stroke="#fff" stroke-width="1.700" fill="none"/></svg>' : ''}<slot></slot></label><i></i>`);

define('prop-editor', `:host{display:flex;flex-direction:column;background:#303030;border-radius:5px;overflow:hidden}
header{height:25px;display:flex;align-items:center;padding:0 7px 1px 8px;flex:none}
.s{width:111px;background:#1d1d1d;margin:0 auto 0 71px}.s bl-icon{margin:1px 0 0 4px}.s input{flex:1}.seg .solo{min-width:18px}
main{flex:1;display:flex;min-height:0}
aside{width:28px;background:#1d1d1d;padding:7px 0 0 2px;display:flex;flex-direction:column}
aside div{display:flex;flex-direction:column;border-bottom:1px solid #191919;padding-bottom:0;margin-bottom:7px}
aside button{height:28px;display:flex;align-items:center;padding-left:5px;color:#aaa}aside .a span{background:#303030;border-radius:4px 0 0 4px;display:flex;align-items:center;height:26px;flex:1;margin-left:-5px;padding-left:5px}
.c{flex:1;padding:8px 7px 0 8px;display:flex;flex-direction:column;gap:2px}
.bc{height:20px;gap:8px;padding:0 2px}.bc .p{margin-left:auto;color:#999}.bc .z{margin:0 -2px 0 4px}.bc span{padding-top:1px}
.id{margin:15px 0 8px}.id bl-drop{width:31px;height:18px;border-right:1px solid #3d3d3d}.id input{flex:1;background:#1d1d1d;padding-left:7px}
.tg{display:flex;gap:1px;border-radius:3px;overflow:hidden}.tg button{flex:1;height:18px;background:#545454;text-align:center}.tg .on{background:#4772b3}
.lb{height:31px;line-height:31px}.lb.k{height:28px;line-height:28px}
.fr{display:flex;align-items:center;height:18px;margin-bottom:5px}.fr .l{width:95px;text-align:right;margin-right:10px}
.sel{flex:1;position:relative;display:flex}.sel select{appearance:none;flex:1;height:18px;background:#282828;border-radius:3px;padding-left:7px}.sel bl-icon{position:absolute;right:-1px;top:1px;pointer-events:none}
.fr i{width:4px;height:4px;border-radius:2px;background:#ddd;margin:0 7px 0 9px}
.ck{appearance:none;width:12px;height:12px;border-radius:2px;background:#545454;margin-right:8px}
.nf{flex:1;display:flex;justify-content:space-between;align-items:center;height:18px;background:#484848;color:#888;border-radius:3px;padding:0 13px 0 15px}.nf input{width:40px;text-align:right;font-family:"DejaVu Sans"}
prop-check{margin:0}.fr.z{margin:5px 0 0}`,
 el => { const tab = (n, c, a) => `<button aria-label="${n}" ${a ? 'class="a"' : ''} style="color:${c || '#b4b4b4'}">${a ? '<span>' : ''}<bl-icon name="${n}"></bl-icon>${a ? '</span>' : ''}</button>`;
 return `<header><bl-drop bare style="width:32px" icon="props"></bl-drop><label class="seg s"><bl-icon name="search"></bl-icon><input aria-label="search"></label><div class="seg"><button class="solo" aria-label="options"><bl-icon name="chev"></bl-icon></button></div></header>
<main><aside><div>${tab('tool')}</div><div>${tab('render')}${tab('output')}${tab('vlayer')}${tab('scene')}${tab('world', '#b5505c')}</div><div>${tab('colltab', '#ddd')}</div><div>${tab('object', '#d08048')}${tab('physics', '#5f83d8')}${tab('constraint', '#5f83d8')}${tab('run', '#00d6a3', 1)}${tab('bone', '#10b48a')}</div></aside>
<div class="c"><div class="bc row"><bl-icon name="object"></bl-icon><span>骨架</span><bl-icon class="z" name="gt"></bl-icon><bl-icon name="run"></bl-icon><span>骨架.003</span><bl-icon class="p" name="pin"></bl-icon></div>
<div class="seg id"><bl-drop flat bare icon="run"></bl-drop><input aria-label="name" value="骨架.003"><button class="lit" style="color:#aaa" aria-label="fake user"><bl-icon name="shield"></bl-icon></button></div>
<bl-panel heading="骨架" open><div class="tg"><button class="on">姿态位置</button><button>静置位置</button></div><div class="lb">层:</div><layer-grid active></layer-grid><div class="lb k">受保护层:</div><layer-grid></layer-grid></bl-panel>
<bl-panel heading="骨骼组"></bl-panel><bl-panel heading="姿态库(旧版)"></bl-panel><bl-panel heading="运动路径"></bl-panel>
<bl-panel heading="视图显示" open><div class="fr"><label class="l" for="disp">显示为</label><span class="sel"><select id="disp"><option>八面锥</option></select><bl-icon name="chev"></bl-icon></span><i></i></div>
<prop-check label="显示">名称</prop-check><prop-check checked>形状</prop-check><prop-check checked>组颜色</prop-check><prop-check>在前面</prop-check>
<div class="fr z"><label class="l" for="ax">轴向</label><input id="ax" class="ck" type="checkbox"><label class="nf">位置<input value="0.0"></label><i></i></div></bl-panel>
<bl-panel heading="反向运动学"></bl-panel><bl-panel heading="自定义属性"></bl-panel></div></main>`; });

define('status-bar', `:host{display:flex;height:20px;background:#1d1d1d;color:#999;align-items:center;padding:1px 8px 0 9px}
div{display:flex;gap:9px;align-items:center;width:211px;white-space:nowrap}span{margin-left:auto;font-family:"DejaVu Sans"}`,
 `<div><bl-icon name="mouseL"></bl-icon>选择</div><div><bl-icon name="mouseM"></bl-icon>旋转视图</div><div><bl-icon name="mouseR"></bl-icon>骨架上下文菜单</div><span>3.3.6</span>`);

define('blender-app', `:host{display:flex;flex-direction:column;height:100vh}
main{flex:1;display:grid;grid-template-columns:1fr 331px;gap:3px;padding:0 1px 1px;min-height:0}
section{display:flex;flex-direction:column;gap:3px;min-width:0;min-height:0}
view-3d,prop-editor{flex:1;min-height:0}time-line{flex:none;height:72px}out-liner{flex:none;height:310px}`,
 `<top-bar></top-bar><main><section><view-3d></view-3d><time-line></time-line></section><section><out-liner></out-liner><prop-editor></prop-editor></section></main><status-bar></status-bar>`);
</script>
</body>
</html>
